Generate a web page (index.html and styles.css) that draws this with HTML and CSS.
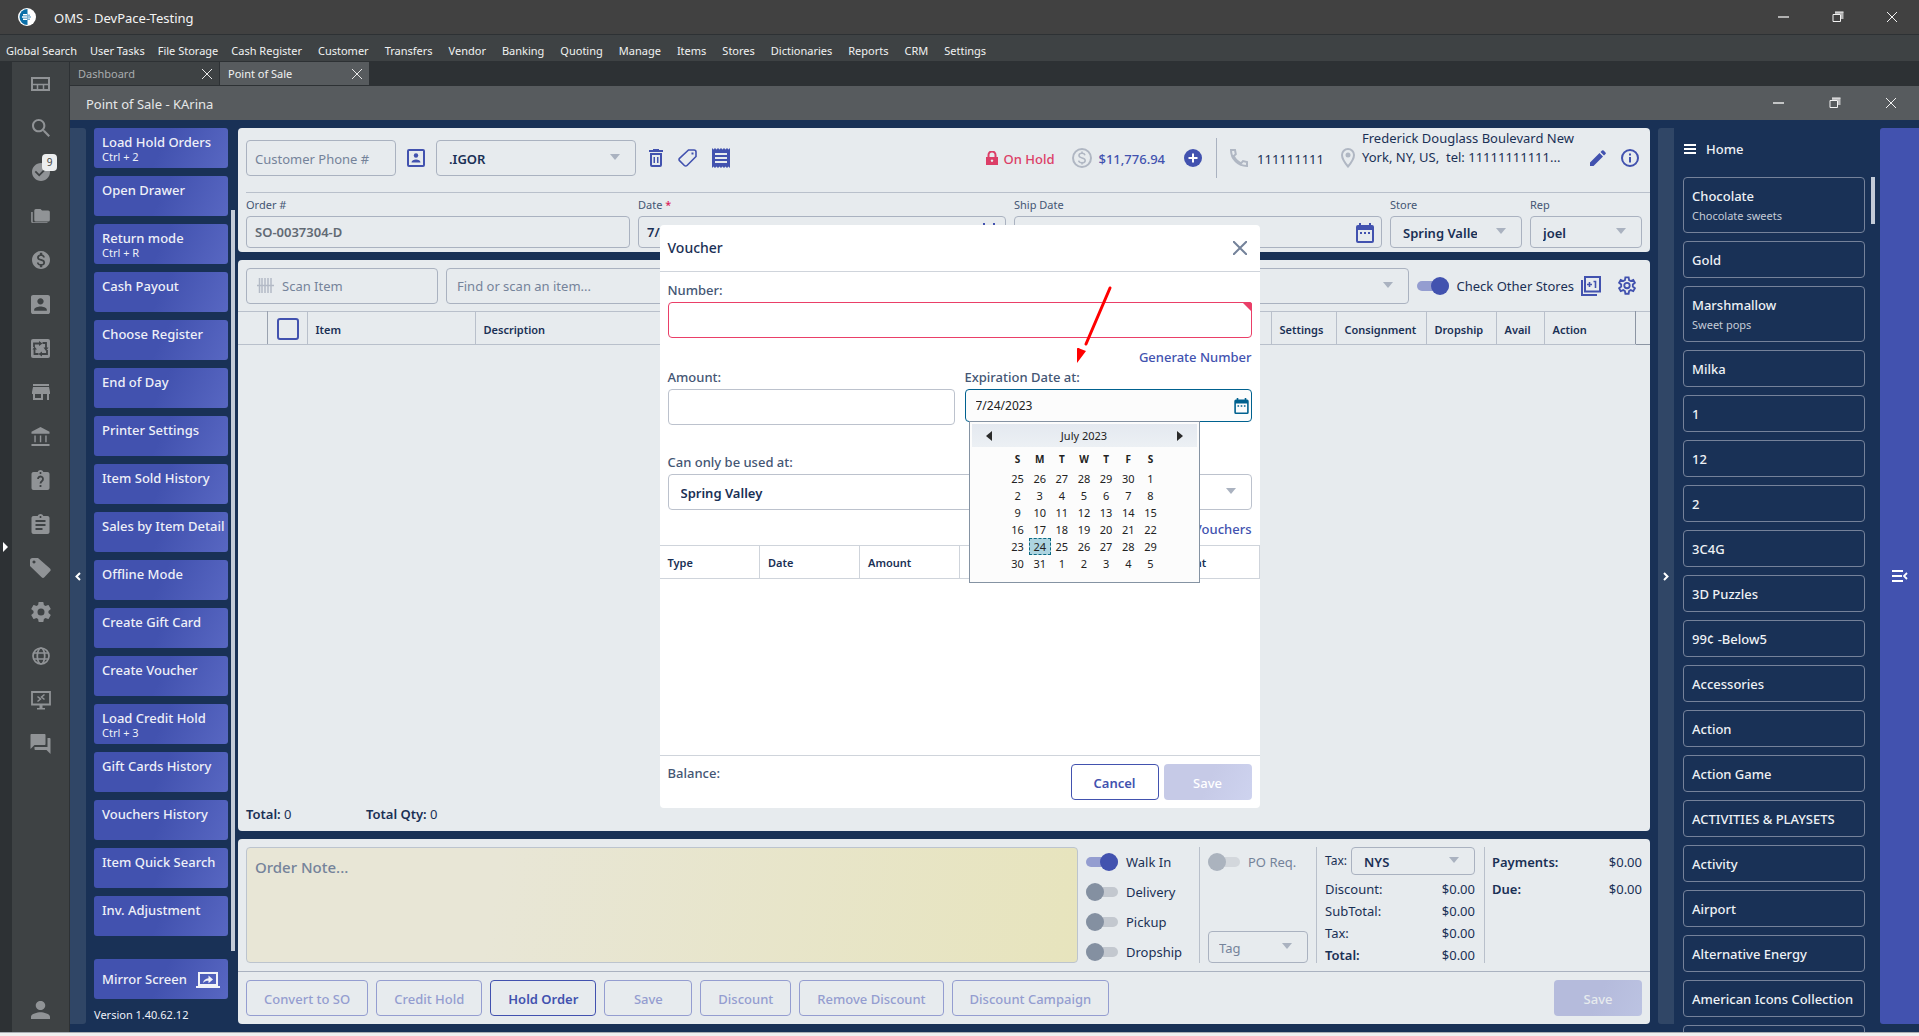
FILE: index.html
```html
<!DOCTYPE html>
<html lang="en">
<head>
<meta charset="utf-8">
<title>OMS - DevPace-Testing</title>
<link rel="stylesheet" href="styles.css">
</head>
<body>
<svg class="sprite" aria-hidden="true">
  <symbol id="i-cal" viewBox="0 0 18 20"><path d="M3 0h2v2h8V0h2v2h1a2 2 0 0 1 2 2v14a2 2 0 0 1-2 2H2a2 2 0 0 1-2-2V4a2 2 0 0 1 2-2h1zM2 7v11h14V7zm2 2h2v2H4zm4 0h2v2H8zm4 0h2v2h-2z" fill="currentColor" fill-rule="evenodd"/></symbol>
  <symbol id="i-close" viewBox="0 0 12 12"><path d="M1 1l10 10M11 1L1 11" stroke="currentColor" fill="none"/></symbol>
  <symbol id="i-restore" viewBox="0 0 12 12"><path d="M1 3.500h7.500v7H1z" fill="none" stroke="currentColor"/><path d="M3 3V1h8.500v7H9V3z" fill="currentColor" opacity=".65"/><path d="M3 1h8.500" stroke="currentColor"/></symbol>
  <symbol id="i-gear" viewBox="2 2 20 20"><path d="M12 15.500A3.500 3.500 0 0 1 8.500 12 3.500 3.500 0 0 1 12 8.500a3.500 3.500 0 0 1 3.500 3.500 3.500 3.500 0 0 1-3.500 3.500m7.430-2.530c.04-.32.07-.64.07-.97 0-.33-.03-.66-.07-1l2.110-1.630c.19-.15.24-.42.12-.64l-2-3.460c-.12-.22-.39-.31-.61-.22l-2.490 1c-.52-.39-1.060-.73-1.690-.98l-.37-2.650A.506.506 0 0 0 14 2h-4c-.25 0-.46.18-.5.42l-.37 2.650c-.63.25-1.170.59-1.690.98l-2.490-1c-.22-.09-.49 0-.61.22l-2 3.460c-.13.22-.07.49.12.64L4.570 11c-.04.34-.07.67-.07 1 0 .33.03.65.07.97l-2.110 1.660c-.19.15-.25.42-.12.64l2 3.460c.12.22.39.3.61.22l2.490-1.010c.52.4 1.060.74 1.690.99l.37 2.650c.04.24.25.42.5.42h4c.25 0 .46-.18.5-.42l.37-2.650c.63-.26 1.170-.59 1.690-.99l2.490 1.010c.22.08.49 0 .61-.22l2-3.460c.12-.22.07-.49-.12-.64z" fill="currentColor"/></symbol>
</svg>

<div class="app">
  <header class="titlebar">
    <svg class="logo" width="18" height="18" viewBox="0 0 18 18"><circle cx="9" cy="9" r="9" fill="#fff"/><path d="M9.500 1a8 8 0 0 0 0 16z" fill="#0b6fa8"/><path d="M5 6h4v1.500H5zM4 8.300h5v1.500H4zM5 10.600h4V12H5z" fill="#fff"/><path d="M9 6.500h3V8H9zM9 8.300h4v1.500H9zM9 10.600h3V12H9z" fill="#7fb4d3"/></svg>
    <h1>OMS - DevPace-Testing</h1>
    <div class="winbtns">
      <button aria-label="Minimize"><svg width="12" height="12" viewBox="0 0 12 12"><path d="M0 6h11" stroke="#b0b0b0" stroke-width="2"/></svg></button>
      <button aria-label="Restore"><svg width="12" height="12"><use href="#i-restore"/></svg></button>
      <button aria-label="Close"><svg width="12" height="12"><use href="#i-close"/></svg></button>
    </div>
  </header>
  <nav class="menubar">
    <a href="#">Global Search</a><a href="#">User Tasks</a><a href="#">File Storage</a><a href="#">Cash Register</a><a href="#">Customer</a><a href="#">Transfers</a><a href="#">Vendor</a><a href="#">Banking</a><a href="#">Quoting</a><a href="#">Manage</a><a href="#">Items</a><a href="#">Stores</a><a href="#">Dictionaries</a><a href="#">Reports</a><a href="#">CRM</a><a href="#">Settings</a>
  </nav>

  <div class="shell">
    <button class="edge" aria-label="Expand"><svg width="5" height="10" viewBox="0 0 5 10"><path d="M0 0l5 5-5 5z" fill="#fff"/></svg></button>
    <nav class="rail">
      <a href="#" aria-label="Dashboard"><svg width="19" height="14" viewBox="0 0 19 14"><path d="M1 1h17v12H1z" fill="none" stroke="currentColor" stroke-width="2"/><path d="M1 7.500h17M6.500 8v5M12.500 8v5" stroke="currentColor" stroke-width="1.500"/></svg></a>
      <a href="#" aria-label="Search"><svg width="18" height="18" viewBox="3 3 17.500 17.500"><path d="M15.500 14h-.79l-.28-.27C15.410 12.590 16 11.110 16 9.500 16 5.910 13.090 3 9.500 3S3 5.910 3 9.500 5.910 16 9.500 16c1.610 0 3.090-.59 4.230-1.570l.27.28v.79l5 4.990L20.490 19zm-6 0C7.010 14 5 11.990 5 9.500S7.010 5 9.500 5 14 7.010 14 9.500 11.990 14 9.500 14z" fill="currentColor"/></svg></a>
      <a href="#" aria-label="Tasks"><svg width="18" height="18" viewBox="2 2 20 20"><path d="M12 2C6.480 2 2 6.480 2 12s4.480 10 10 10 10-4.480 10-10S17.520 2 12 2zm-2 15l-5-5 1.410-1.410L10 14.170l7.590-7.590L19 8z" fill="currentColor"/></svg><span class="badge">9</span></a>
      <a href="#" aria-label="Files"><svg width="19" height="14" viewBox="0 2 24 18"><path d="M22 4H14L12 2H6A2 2 0 0 0 4 4V16A2 2 0 0 0 6 18H22A2 2 0 0 0 24 16V6A2 2 0 0 0 22 4M2 6H0V18A2 2 0 0 0 2 20H21V19H2z" fill="currentColor"/></svg></a>
      <a href="#" aria-label="Sales"><svg width="18" height="18" viewBox="2 2 20 20"><path d="M12 2C6.480 2 2 6.480 2 12s4.480 10 10 10 10-4.480 10-10S17.520 2 12 2zm1.410 16.090V20h-2.670v-1.930c-1.710-.36-3.160-1.460-3.270-3.400h1.960c.1 1.050.82 1.870 2.650 1.870 1.960 0 2.400-.98 2.400-1.590 0-.83-.44-1.610-2.670-2.140-2.480-.6-4.180-1.620-4.180-3.670 0-1.720 1.390-2.840 3.110-3.210V4h2.670v1.950c1.860.45 2.790 1.860 2.850 3.390H14.300c-.05-1.110-.64-1.870-2.220-1.870-1.500 0-2.400.68-2.400 1.640 0 .84.65 1.390 2.670 1.910s4.180 1.390 4.180 3.910c-.01 1.830-1.380 2.830-3.120 3.160z" fill="currentColor"/></svg></a>
      <a href="#" aria-label="Contacts"><svg width="19" height="19" viewBox="3 3 18 18"><path d="M3 5v14c0 1.100.89 2 2 2h14c1.100 0 2-.9 2-2V5c0-1.100-.9-2-2-2H5c-1.110 0-2 .9-2 2zm12 4c0 1.660-1.340 3-3 3s-3-1.340-3-3 1.340-3 3-3 3 1.340 3 3zm-9 8c0-2 4-3.100 6-3.100s6 1.100 6 3.100v1H6z" fill="currentColor"/></svg></a>
      <a href="#" aria-label="Transfers"><svg width="19" height="19" viewBox="0 0 19 19"><rect width="19" height="19" rx="2" fill="currentColor"/><path d="M3 8V4.500h6M11.500 4H15v5.500M16 11v4h-6M7.500 15H3.500v-5" fill="none" stroke="#3e4244" stroke-width="1.800"/><path d="M8 2l3.500 2.500L8 7zM12.500 8.500h5L15 12zM11 12.500v5L7.500 15zM1.500 10.500L3.500 7.500l2.500 3z" fill="#3e4244"/></svg></a>
      <a href="#" aria-label="Store"><svg width="18" height="16" viewBox="3 4 18 16"><path d="M20 4H4v2h16zm1 10v-2l-1-5H4l-1 5v2h1v6h10v-6h4v6h2v-6zm-9 4H6v-4h6z" fill="currentColor"/></svg></a>
      <a href="#" aria-label="Bank"><svg width="19" height="19" viewBox="2 1 19 20"><path d="M5 10h1.500v7H5zM10.800 10h1.500v7h-1.500zM16.500 10H18v7h-1.500zM2 19h19v2H2zM11.500 1L2 6v2h19V6z" fill="currentColor"/></svg></a>
      <a href="#" aria-label="Help"><svg width="19" height="20" viewBox="3 1 18 20"><path d="M19 3h-4.180C14.400 1.840 13.300 1 12 1c-1.300 0-2.400.84-2.820 2H5c-1.100 0-2 .9-2 2v14c0 1.100.9 2 2 2h14c1.100 0 2-.9 2-2V5c0-1.100-.9-2-2-2zm-7 0c.55 0 1 .45 1 1s-.45 1-1 1-1-.45-1-1 .45-1 1-1z" fill="currentColor"/><path d="M9.500 10a2.500 2.500 0 1 1 4 2c-1 .8-1.500 1.200-1.500 2.500M12 16v2" fill="none" stroke="#3e4244" stroke-width="1.800"/></svg></a>
      <a href="#" aria-label="Reports"><svg width="19" height="20" viewBox="3 1 18 20"><path d="M19 3h-4.180C14.400 1.840 13.300 1 12 1c-1.300 0-2.400.84-2.820 2H5c-1.100 0-2 .9-2 2v14c0 1.100.9 2 2 2h14c1.100 0 2-.9 2-2V5c0-1.100-.9-2-2-2zm-7 0c.55 0 1 .45 1 1s-.45 1-1 1-1-.45-1-1 .45-1 1-1zm2 14H7v-2h7zm3-4H7v-2h10zm0-4H7V7h10z" fill="currentColor"/></svg></a>
      <a href="#" aria-label="Prices"><svg width="21" height="20" viewBox="0 0 21 20"><path d="M0 2.500A2.500 2.500 0 0 1 2.500 0H8l12 10.500a2 2 0 0 1 0 2.800l-5.600 5.900a2 2 0 0 1-2.800 0L0 8zM4 2.400a1.500 1.500 0 1 0 .01 0z" fill="currentColor" fill-rule="evenodd"/></svg></a>
      <a href="#" aria-label="Settings"><svg width="20" height="20"><use href="#i-gear"/></svg></a>
      <a href="#" aria-label="Web"><svg width="18" height="18" viewBox="0 0 18 18"><g fill="none" stroke="currentColor" stroke-width="1.700"><circle cx="9" cy="9" r="8"/><ellipse cx="9" cy="9" rx="3.700" ry="8"/><path d="M1.500 6h15M1.500 12h15"/></g></svg></a>
      <a href="#" aria-label="Remote"><svg width="20" height="19" viewBox="0 0 20 19"><path d="M1 1h18v12.500H1z" fill="none" stroke="currentColor" stroke-width="1.800"/><path d="M8.500 14h3v3H14v1.500H6V17h2.500z" fill="currentColor"/><path d="M6.500 5.500l3 2.500-3 2.500M13.500 3.500l-3 2.500 3 2.500" fill="none" stroke="currentColor" stroke-width="1.500"/></svg></a>
      <a href="#" aria-label="Chat"><svg width="21" height="20" viewBox="2 2 20 20"><path d="M21 6h-2v9H6v2c0 .55.450 1 1 1h11l4 4V7c0-.55-.45-1-1-1zm-4 6V3c0-.55-.45-1-1-1H3c-.55 0-1 .45-1 1v14l4-4h10c.55 0 1-.45 1-1z" fill="currentColor"/></svg></a>
      <a href="#" class="last" aria-label="Profile"><svg width="19" height="18" viewBox="4 4 16 16" preserveAspectRatio="none"><path d="M12 12c2.210 0 4-1.790 4-4s-1.790-4-4-4-4 1.790-4 4 1.790 4 4 4zm0 2c-2.670 0-8 1.340-8 4v2h16v-2c0-2.660-5.330-4-8-4z" fill="currentColor"/></svg></a>
    </nav>

    <div class="content">
      <div class="tabs">
        <div class="tab"><a href="#">Dashboard</a><button aria-label="Close Dashboard"><svg width="12" height="12"><use href="#i-close"/></svg></button></div>
        <div class="tab active"><a href="#">Point of Sale</a><button aria-label="Close Point of Sale"><svg width="12" height="12"><use href="#i-close"/></svg></button></div>
      </div>
      <div class="docbar">
        <h2>Point of Sale - KArina</h2>
        <div class="winbtns">
          <button aria-label="Minimize"><svg width="12" height="12" viewBox="0 0 12 12"><path d="M0 6h11" stroke="#c3c5c6" stroke-width="2"/></svg></button>
          <button aria-label="Restore"><svg width="12" height="12"><use href="#i-restore"/></svg></button>
          <button aria-label="Close"><svg width="12" height="12"><use href="#i-close"/></svg></button>
        </div>
      </div>

      <div class="workspace">
        <button class="strip left" aria-label="Collapse actions"><svg width="6" height="9" viewBox="0 0 6 9"><path d="M5 1L1.500 4.500 5 8" fill="none" stroke="#fff" stroke-width="2"/></svg></button>
        <aside class="actions">
          <div class="action-list">
            <div class="buttons">
              <button>Load Hold Orders<small>Ctrl + 2</small></button>
              <button>Open Drawer</button>
              <button>Return mode<small>Ctrl + R</small></button>
              <button>Cash Payout</button>
              <button>Choose Register</button>
              <button>End of Day</button>
              <button>Printer Settings</button>
              <button>Item Sold History</button>
              <button>Sales by Item Detail</button>
              <button>Offline Mode</button>
              <button>Create Gift Card</button>
              <button>Create Voucher</button>
              <button>Load Credit Hold<small>Ctrl + 3</small></button>
              <button>Gift Cards History</button>
              <button>Vouchers History</button>
              <button>Item Quick Search</button>
              <button>Inv. Adjustment</button>
            </div>
            <div class="scrollbar"></div>
          </div>
          <button class="mirror">Mirror Screen<svg width="24" height="16" viewBox="0 0 24 16"><path d="M3 1h18v12H3z" fill="none" stroke="#f0f2f8" stroke-width="2"/><path d="M0 14h24v2H0z" fill="#f0f2f8"/><path d="M7 11c.5-3 2.500-4.500 5.500-4.800V3.500L17 7.500l-4.500 3.700V8.700C10 8.700 8.500 9.300 7 11z" fill="#f0f2f8"/></svg></button>
          <p class="version">Version 1.40.62.12</p>
        </aside>

        <main class="main">
          <section class="panel">
            <div class="customer">
              <input class="box phone" type="text" placeholder="Customer Phone #" aria-label="Customer Phone">
              <button class="ico" aria-label="Contact"><svg width="18" height="18" viewBox="0 0 18 18"><rect x="1" y="1" width="16" height="16" rx="1" fill="none" stroke="currentColor" stroke-width="2"/><circle cx="9" cy="6.500" r="2.200" fill="currentColor"/><path d="M4.500 13.500c0-4 9-4 9 0z" fill="currentColor"/></svg></button>
              <span class="select cust"><select aria-label="Customer"><option>.IGOR</option></select></span>
              <div class="tools">
                <button class="ico" aria-label="Delete"><svg width="14" height="18" viewBox="0 0 14 18"><path d="M4 0h6v1h4v2H0V1h4zM1 4h12v12a2 2 0 0 1-2 2H3a2 2 0 0 1-2-2zm2 2v10h8V6zm1.500 2H6v6H4.500zM8 8h1.500v6H8z" fill="currentColor" fill-rule="evenodd"/></svg></button>
                <button class="ico" aria-label="Tag"><svg width="19" height="18" viewBox="0 0 19 18"><path d="M10.500 1H16a2 2 0 0 1 2 2v4.500L9 16.500a1.800 1.800 0 0 1-2.600 0l-4.900-4.900a1.600 1.600 0 0 1 0-2.300z" fill="none" stroke="currentColor" stroke-width="1.600"/><path d="M13.500 3.500h2v2h-2z" fill="currentColor"/></svg></button>
                <button class="ico" aria-label="Receipt"><svg width="18" height="20" viewBox="0 0 18 20"><path d="M0 0l1.500 1.500L3 0l1.500 1.500L6 0l1.500 1.500L9 0l1.500 1.500L12 0l1.500 1.500L15 0l1.500 1.500L18 0v20l-1.500-1.500L15 20l-1.500-1.500L12 20l-1.500-1.500L9 20l-1.500-1.500L6 20l-1.500-1.500L3 20l-1.500-1.500L0 20zM3 5v2h12V5zm0 4v2h12V9zm0 4v2h12v-2z" fill="currentColor" fill-rule="evenodd"/></svg></button>
              </div>
              <div class="status">
                <svg width="12" height="14" viewBox="0 0 12 14"><path d="M0 6h1.500V4a4.500 4.500 0 0 1 9 0v2H12v8H0zm3.500 0h5V4a2.500 2.500 0 0 0-5 0zM6 8.500a1.200 1.200 0 1 0 .01 0z" fill="currentColor" fill-rule="evenodd"/></svg>
                <span class="hold">On Hold</span>
                <svg class="muted" width="20" height="20" viewBox="0 0 20 20"><circle cx="10" cy="10" r="9" fill="none" stroke="currentColor" stroke-width="2"/><path d="M13 7.200C12.600 5.900 11.500 5.300 10 5.300c-1.700 0-3 .8-3 2.200 0 3.200 6.200 1.600 6.200 4.900 0 1.500-1.400 2.300-3.200 2.300-1.700 0-3-.7-3.400-2.100M10 3.500v2M10 14.500v2" fill="none" stroke="currentColor" stroke-width="1.600"/></svg>
                <a href="#" class="amount">$11,776.94</a>
                <button class="ico" aria-label="Add"><svg width="18" height="18" viewBox="0 0 18 18"><circle cx="9" cy="9" r="9" fill="currentColor"/><path d="M9 4.500v9M4.500 9h9" stroke="#fff" stroke-width="2"/></svg></button>
              </div>
              <div class="contact">
                <svg class="muted" width="18" height="18" viewBox="0 0 18 18"><path d="M1 1h4l.8 4.200L3.700 7c1.400 3.200 4 5.800 7.300 7.300l2-2.200 4 .9v4C8 17 1 10 1 1z" fill="none" stroke="currentColor" stroke-width="2"/></svg>
                <span class="tel">111111111</span>
                <svg class="muted" width="14" height="20" viewBox="0 0 14 20"><path d="M7 1a6 6 0 0 1 6 6c0 4.500-6 11.500-6 11.500S1 11.500 1 7a6 6 0 0 1 6-6z" fill="none" stroke="currentColor" stroke-width="2"/><circle cx="7" cy="7" r="2.500" fill="currentColor"/></svg>
                <address>Frederick Douglass Boulevard New<br>York, NY, US,&nbsp; tel: 11111111111...</address>
                <button class="ico" aria-label="Edit"><svg width="16" height="16" viewBox="0 0 16 16"><path d="M0 12.500L9.500 3l3.500 3.500L3.500 16H0zM10.500 2L12 .5a1.200 1.200 0 0 1 1.600 0l1.900 1.900a1.200 1.200 0 0 1 0 1.600L14 5.500z" fill="currentColor"/></svg></button>
                <button class="ico" aria-label="Info"><svg width="18" height="18" viewBox="0 0 18 18"><circle cx="9" cy="9" r="8" fill="none" stroke="currentColor" stroke-width="2"/><path d="M8 4.500h2v2H8zM8 8h2v5.500H8z" fill="currentColor"/></svg></button>
              </div>
            </div>
            <div class="orderrow">
              <div class="field order"><label for="ord">Order #</label><input id="ord" class="box ro" type="text" value="SO-0037304-D" readonly></div>
              <div class="field"><label for="dat">Date <b class="req">*</b></label><span class="datebox"><input id="dat" class="box" type="text" value="7/24/2023"><svg width="18" height="20"><use href="#i-cal"/></svg></span></div>
              <div class="field"><label for="ship">Ship Date</label><span class="datebox"><input id="ship" class="box" type="text"><svg width="18" height="20"><use href="#i-cal"/></svg></span></div>
              <div class="field store"><label for="sto">Store</label><span class="select"><select id="sto"><option>Spring Valley</option></select></span></div>
              <div class="field rep"><label for="rep">Rep</label><span class="select"><select id="rep"><option>joel</option></select></span></div>
            </div>
          </section>

          <section class="panel items">
            <div class="scanrow">
              <span class="scan"><svg width="17" height="15" viewBox="0 0 17 15"><path d="M2.500 0v15M5 0v15M8 0v15M11 0v15M14 0v15M0 7.500h17" stroke="#b3bac6" stroke-width="1.500"/></svg><input class="box" type="text" placeholder="Scan Item" aria-label="Scan Item"></span>
              <span class="select find"><input class="box" type="text" placeholder="Find or scan an item..." aria-label="Find item"></span>
              <label class="toggle"><input type="checkbox" checked>Check Other Stores</label>
              <button class="ico add1" aria-label="Add one"><svg width="20" height="20" viewBox="0 0 20 20"><path d="M4 1h15v14.500H4zM1 4v15h15" fill="none" stroke="currentColor" stroke-width="2"/><path d="M6 8.500h5M8.500 6v5M12.500 5.500h2V12" fill="none" stroke="currentColor" stroke-width="1.600"/></svg></button>
              <button class="ico" aria-label="Settings"><svg width="20" height="20" viewBox="1 1 22 22"><path d="M10.200 2.500h3.600l.5 3 1.800 1 2.800-1.100 1.800 3.100-2.300 1.900v2.200l2.300 1.900-1.800 3.100-2.800-1.100-1.800 1-.5 3h-3.600l-.5-3-1.800-1-2.800 1.100-1.800-3.100 2.300-1.900v-2.200L3.300 8.500l1.800-3.100 2.800 1.100 1.800-1z" fill="none" stroke="currentColor" stroke-width="2"/><circle cx="12" cy="11.500" r="3" fill="none" stroke="currentColor" stroke-width="2"/></svg></button>
            </div>
            <table class="grid">
              <colgroup><col style="width:29px"><col style="width:40px"><col style="width:168px"><col><col style="width:65px"><col style="width:90px"><col style="width:70px"><col style="width:48px"><col style="width:91px"><col style="width:15px"></colgroup>
              <thead><tr><th class="gut"></th><th class="chk"><input type="checkbox" aria-label="Select all"></th><th>Item</th><th>Description</th><th>Settings</th><th>Consignment</th><th>Dropship</th><th>Avail</th><th>Action</th><th class="gut2"></th></tr></thead>
            </table>
            <div class="totals"><span><b>Total:</b> 0</span><span><b>Total Qty:</b> 0</span></div>
          </section>

          <section class="panel">
            <div class="summary">
              <textarea class="note" placeholder="Order Note..." aria-label="Order note"></textarea>
              <div class="modes">
                <label class="toggle"><input type="checkbox" checked>Walk In</label>
                <label class="toggle"><input type="checkbox">Delivery</label>
                <label class="toggle"><input type="checkbox">Pickup</label>
                <label class="toggle"><input type="checkbox">Dropship</label>
              </div>
              <div class="po">
                <label class="toggle off"><input type="checkbox" disabled>PO Req.</label>
                <span class="select tag"><select aria-label="Tag"><option>Tag</option></select></span>
              </div>
              <div class="taxes">
                <div class="taxrow"><label for="tax">Tax:</label><span class="select tax"><select id="tax"><option>NYS</option></select></span></div>
                <dl><div><dt>Discount:</dt><dd>$0.00</dd></div><div><dt>SubTotal:</dt><dd>$0.00</dd></div><div><dt>Tax:</dt><dd>$0.00</dd></div><div class="strong"><dt>Total:</dt><dd>$0.00</dd></div></dl>
              </div>
              <dl class="pay"><div class="strong"><dt>Payments:</dt><dd>$0.00</dd></div><div class="strong"><dt>Due:</dt><dd>$0.00</dd></div></dl>
            </div>
            <div class="cmds">
              <button disabled>Convert to SO</button><button disabled>Credit Hold</button><button class="on">Hold Order</button><button disabled>Save</button><button disabled>Discount</button><button disabled>Remove Discount</button><button disabled>Discount Campaign</button>
              <button class="primary" disabled>Save</button>
            </div>
          </section>
        </main>

        <button class="strip right" aria-label="Collapse catalog"><svg width="6" height="9" viewBox="0 0 6 9"><path d="M1 1l3.500 3.500L1 8" fill="none" stroke="#fff" stroke-width="2"/></svg></button>
        <aside class="catalog">
          <div class="home"><svg width="12" height="10" viewBox="0 0 12 10"><path d="M0 1h12M0 5h12M0 9h12" stroke="#fff" stroke-width="2"/></svg>Home</div>
          <div class="cards">
            <div class="cardlist">
              <button>Chocolate<small>Chocolate sweets</small></button>
              <button>Gold</button>
              <button>Marshmallow<small>Sweet pops</small></button>
              <button>Milka</button>
              <button>1</button>
              <button>12</button>
              <button>2</button>
              <button>3C4G</button>
              <button>3D Puzzles</button>
              <button>99¢ -Below5</button>
              <button>Accessories</button>
              <button>Action</button>
              <button>Action Game</button>
              <button>ACTIVITIES &amp; PLAYSETS</button>
              <button>Activity</button>
              <button>Airport</button>
              <button>Alternative Energy</button>
              <button>American Icons Collection</button>
              <button aria-label="Next category"></button>
            </div>
            <div class="scrollbar short"></div>
          </div>
        </aside>
        <button class="drawer" aria-label="Open menu"><svg width="16" height="12" viewBox="0 0 16 12"><path d="M0 1h11M0 6h10M0 11h11M15 3l-3 3 3 3" fill="none" stroke="#fff" stroke-width="1.800"/></svg></button>
      </div>
    </div>
  </div>
  <footer class="taskline"></footer>

  <div class="overlay">
    <form class="modal" role="dialog" aria-labelledby="vt">
      <header><h3 id="vt">Voucher</h3><button type="button" aria-label="Close"><svg width="14" height="14" viewBox="0 0 14 14"><path d="M0 0l14 14M14 0L0 14" stroke="#74829a" stroke-width="2"/></svg></button></header>
      <div class="body">
        <div class="mfield"><label for="num">Number:</label><span class="invalid"><input id="num" class="box" type="text"></span></div>
        <a href="#" class="link">Generate Number</a>
        <div class="pair">
          <div class="mfield"><label for="amt">Amount:</label><input id="amt" class="box" type="text"></div>
          <div class="mfield"><label for="exp">Expiration Date at:</label>
            <div class="exp"><input id="exp" class="box" type="text" value="7/24/2023"><svg width="15" height="16"><use href="#i-cal"/></svg>
              <div class="calendar">
                <div class="calhead"><button type="button" aria-label="Previous month"><svg width="6" height="10" viewBox="0 0 6 10"><path d="M6 0v10L0 5z" fill="#2b2b2b"/></svg></button><span>July 2023</span><button type="button" aria-label="Next month"><svg width="6" height="10" viewBox="0 0 6 10"><path d="M0 0v10l6-5z" fill="#2b2b2b"/></svg></button></div>
                <table>
                  <thead><tr><th>S</th><th>M</th><th>T</th><th>W</th><th>T</th><th>F</th><th>S</th></tr></thead>
                  <tbody>
                    <tr><td>25</td><td>26</td><td>27</td><td>28</td><td>29</td><td>30</td><td>1</td></tr>
                    <tr><td>2</td><td>3</td><td>4</td><td>5</td><td>6</td><td>7</td><td>8</td></tr>
                    <tr><td>9</td><td>10</td><td>11</td><td>12</td><td>13</td><td>14</td><td>15</td></tr>
                    <tr><td>16</td><td>17</td><td>18</td><td>19</td><td>20</td><td>21</td><td>22</td></tr>
                    <tr><td>23</td><td class="sel">24</td><td>25</td><td>26</td><td>27</td><td>28</td><td>29</td></tr>
                    <tr><td>30</td><td>31</td><td>1</td><td>2</td><td>3</td><td>4</td><td>5</td></tr>
                  </tbody>
                </table>
              </div>
            </div>
          </div>
        </div>
        <div class="mfield"><label for="use">Can only be used at:</label><span class="select"><select id="use"><option>Spring Valley</option></select></span></div>
        <a href="#" class="link">Vouchers</a>
      </div>
      <table class="vgrid"><colgroup><col style="width:100px"><col style="width:100px"><col style="width:100px"><col style="width:97px"><col style="width:98px"><col></colgroup><thead><tr><th>Type</th><th>Date</th><th>Amount</th><th></th><th></th><th>Amount</th></tr></thead></table>
      <div class="vbody"></div>
      <footer><span>Balance:</span><div><button type="button" class="cancel">Cancel</button><button class="primary" disabled>Save</button></div></footer>
      <svg class="arrow" width="38" height="80" viewBox="0 0 38 80"><path d="M34 4L10 60" stroke="#f00" stroke-width="3" stroke-linecap="round"/><path d="M1 79L2 64l8 3z M1 79V64l9 3z" fill="#f00"/></svg>
    </form>
  </div>
</div>
</body>
</html>
```
FILE: styles.css
```css
*{box-sizing:border-box}
body{margin:0;font:13px/18px "Noto Sans","Open Sans",sans-serif;color:#1a3055;background:#193156}
h1,h2,h3,p,dl,dd{margin:0;font-weight:400}
button,input,select,textarea{font:inherit;color:inherit;margin:0}
button{border:0;background:none;padding:0;display:flex;align-items:center;justify-content:center}
a{color:inherit;text-decoration:none}
svg{display:block;flex:none}
address{font-style:normal}
.sprite{position:absolute;width:0;height:0}
.app{position:relative;height:100vh;display:flex;flex-direction:column;overflow:hidden}

.titlebar{height:35px;flex:none;display:flex;align-items:center;padding-left:18px;background:#414141;border-bottom:1px solid #2d3134;color:#f4f4f4}
.titlebar h1{flex:1;margin-left:18px;font-size:13px;line-height:18px;padding-top:2px}
.winbtns{display:flex;color:#f2f2f2}
.winbtns button{width:54px;height:30px}
.menubar{height:26px;flex:none;display:flex;gap:13px;align-items:center;padding:5px 6px 0;background:#3e4244;color:#f1f2f2;font-size:11px;line-height:16px;white-space:nowrap}
.menubar a:nth-child(n+4){margin-right:3px}

.shell{flex:1;min-height:0;display:flex}
.edge{width:12px;background:#2d3134;padding-right:2px}
.rail{width:58px;flex:none;display:flex;flex-direction:column;background:#3e4244;border-right:1px solid #2d3134;border-top:1px solid #2d3134;color:#909396}
.rail a{position:relative;height:44px;display:flex;align-items:center;justify-content:center}
.rail .last{margin-top:auto}
.badge{position:absolute;left:30px;top:4px;width:15px;height:17px;border-radius:4px;background:#eceeef;color:#444;font-size:10px;line-height:17px;text-align:center}
.content{flex:1;min-width:0;display:flex;flex-direction:column}
.tabs{height:25px;flex:none;display:flex;gap:1px;padding-top:1px;background:#2d3134}
.tab{width:149px;display:flex;align-items:center;justify-content:space-between;padding:1px 6px 0 8px;margin-bottom:1px;background:#3e4244;color:#a9acae;font-size:11px}
.tab.active{background:#575b5e;color:#f1f2f2}
.tab button{color:#e8e8e8}
.docbar{height:34px;flex:none;display:flex;align-items:center;justify-content:space-between;padding-left:16px;background:#575b5e;color:#e6e8e9}
.docbar h2{font-size:13px;line-height:18px;padding-top:2px}
.docbar .winbtns button{width:56px}

.workspace{flex:1;min-height:0;display:flex;padding:8px 0;background:#193156}
.strip{width:16px;flex:none;background:#304666;border-radius:0 3px 3px 0}
.strip.right{margin-left:8px;border-radius:3px 0 0 3px}
.actions{width:152px;flex:none;display:flex;flex-direction:column;padding-left:8px;color:#eef0f8}
.action-list{flex:1;min-height:0;display:flex;gap:3px}
.buttons{width:134px;display:flex;flex-direction:column;gap:8px}
.actions button{width:134px;height:40px;flex:none;flex-direction:column;align-items:flex-start;justify-content:flex-start;padding:6px 0 0 8px;border-radius:3px;background:linear-gradient(115deg,#4252af 50%,#5867c2);font-weight:500;line-height:17px;white-space:nowrap}
.actions small{font-size:11px;line-height:12px;font-weight:400}
.scrollbar{width:4px;background:#c3cbd8;margin:82px 0 8px}
.actions .mirror{flex-direction:row;align-items:center;justify-content:space-between;padding:1px 8px 0}
.version{font-size:11px;line-height:16px;padding:8px 0 1px}

.main{flex:1;min-width:0;display:flex;flex-direction:column;gap:8px}
.panel{background:#e7ebee;border-radius:4px;overflow:hidden}
.customer{height:65px;display:flex;align-items:center;margin-left:8px;padding:0 11px 5px 0;border-bottom:1px solid #b9c0cb}
.box,.select select{width:100%;height:36px;border:1px solid #aab2c0;border-radius:4px;background:transparent;outline:0;padding:0 8px;font-size:13px}
.box::placeholder,.note::placeholder{color:#75839a;opacity:1}
.customer .phone{width:150px;padding-top:2px}
.ico{color:#4252af}
.phone+.ico{margin:0 11px}
.select{position:relative;display:block}
.select select{appearance:none;padding:2px 44px 0 12px;font-weight:600;overflow:hidden}
.select::after{content:"";position:absolute;right:16px;top:50%;margin-top:-4px;border:5px solid transparent;border-top:6px solid #aab2c0;border-bottom:0}
.cust{width:200px}
.tools{display:flex;gap:15px;margin-left:13px}
.status{margin-left:auto;display:flex;align-items:center;color:#dc3e67;padding-right:14px;border-right:1px solid #aab2c0;height:40px}
.hold{margin:2px 18px 0 6px;font-weight:500}
.muted{color:#b0b7c3}
.amount{color:#4252af;font-weight:500;margin:2px 19px 0 6px}
.contact{display:flex;align-items:center;margin-left:13px}
.tel{margin:2px 17px 0 9px}
.contact address{width:212px;min-height:58px;line-height:19px;margin:0 16px 0 7px;white-space:nowrap}
.contact .ico+.ico{margin-left:15px}
.orderrow{display:flex;gap:8px;padding:2px 8px 4px}
.field{flex:23}
.field.order{flex:24}
.field.store{flex:0 0 132px}
.field.rep{flex:0 0 112px}
.field label{display:block;font-size:11px;line-height:20px;padding-bottom:1px;color:#445674}
.req{color:#dc1e5a;font-weight:500}
.field .box,.field select{height:32px;font-weight:600}
.box.ro{color:#626a74}
.datebox{position:relative;display:block}
.datebox svg{position:absolute;right:8px;top:7px;color:#4252af}

.items{flex:1;min-height:0;display:flex;flex-direction:column}
.scanrow{display:flex;align-items:center;padding:8px 13px 7px 8px}
.scan{position:relative;width:192px;margin-right:8px}
.scan svg{position:absolute;left:11px;top:10px}
.scan .box{padding-left:35px}
.find{flex:1;margin-right:8px}
.find .box{padding-left:10px}
.toggle{display:flex;align-items:center;gap:8px;white-space:nowrap}
.toggle input{appearance:none;position:relative;width:32px;height:10px;border-radius:5px;background:#c3c8cf}
.toggle input::before{content:"";position:absolute;left:0;top:-4px;width:18px;height:18px;border-radius:9px;background:#8490a1}
.toggle input:checked{background:#949dd0}
.toggle input:checked::before{left:14px;background:#4252af}
.toggle.off{color:#75839a}
.toggle.off input{background:#d3d7dc}
.toggle.off input::before{background:#abb3be}
.add1{margin:0 16px 0 7px}
table{border-collapse:collapse}
.grid{width:100%;table-layout:fixed}
.grid th{height:33px;padding:3px 0 0 8px;text-align:left;font-size:11px;font-weight:600;border:1px solid #b9c0cb;border-width:1px 1px 1px 0}
.grid .gut{border-right-color:#9aa2af}
.grid .gut2{border-right:0;border-bottom-color:#8c95a3}
.grid th:nth-last-child(2){border-right-color:#8c95a3}
.grid .chk{padding:1px 0 0 9px}
.chk input{appearance:none;display:block;width:22px;height:22px;border:2px solid #4252af;border-radius:3px}
.totals{margin-top:auto;display:flex;padding:0 8px 8px}
.totals span{width:120px}
.totals b,.strong{font-weight:600}

.summary{display:flex;padding:8px;height:132px}
.note{flex:1;resize:none;border:1px solid #bcc4ce;border-radius:4px;background:linear-gradient(100deg,#e8e6d6 30%,#e7e4bd);padding:8px;font-size:15px;line-height:22px;outline:0;font-weight:500}
.modes{display:flex;flex-direction:column;gap:12px;padding:6px 0 0 8px;width:122px;border-right:1px solid #b9c0cb}
.po{width:117px;padding:6px 8px 0;display:flex;flex-direction:column;justify-content:space-between;border-right:1px solid #b9c0cb}
.tag select{height:32px;font-weight:400;color:#75839a;padding-left:10px}
.taxes{width:168px;padding:0 9px 0 8px;border-right:1px solid #b9c0cb}
.taxrow{display:flex;gap:4px;align-items:center;justify-content:space-between;font-size:12px}
.tax{width:125px}
.tax select{height:28px}
dl>div{display:flex;justify-content:space-between;line-height:22px}
.taxes dl{padding-top:3px}
.pay{width:157px;padding:4px 0 0 7px;display:flex;flex-direction:column;gap:5px}
.cmds{display:flex;gap:8px;padding:8px;border-top:1px solid #aab2c0}
.cmds button,.modal footer button{min-width:88px;height:36px;padding:1px 17px 0;border:1px solid #949dd0;border-radius:4px;color:#949dd0;font-weight:500;white-space:nowrap}
.cmds .on,.modal footer .cancel{border-color:#4252af;color:#4252af;font-weight:600}
.cmds .primary{margin-left:auto;border:0;color:#e7ebee;background:linear-gradient(115deg,#b5bbdc 50%,#bcc3e2)}

.catalog{width:206px;flex:none;display:flex;flex-direction:column;padding-left:9px;margin-bottom:-8px;color:#eef1f5;font-weight:500}
.home{height:49px;flex:none;display:flex;align-items:center;gap:10px;padding:0 0 8px 1px;line-height:18px}
.cards{flex:1;min-height:0;display:flex;gap:6px;overflow:hidden}
.cardlist{width:182px;display:flex;flex-direction:column;gap:8px}
.cardlist button{height:37px;flex:none;flex-direction:column;align-items:flex-start;padding:0 0 0 8px;border:1px solid #75829a;border-radius:4px;white-space:nowrap}
.cardlist button:has(small){height:56px;padding-top:3px}
.cardlist small{font-size:11px;line-height:22px;font-weight:400;color:#c4cbd6}
.scrollbar.short{height:47px;margin:0}
.drawer{flex:1 0 39px;max-width:39px;background:#4252af;border-radius:3px 0 0 3px}
.taskline{height:4px;flex:none;background:#f0f0f0;border-top:1px solid #a9adb3}

.overlay{position:absolute;inset:0 0 3px;display:flex;align-items:center;justify-content:center}
.modal{position:relative;width:600px;background:#fff;border-radius:4px}
.modal header{height:47px;display:flex;align-items:center;justify-content:space-between;padding:0 13px 0 8px;border-bottom:1px solid #cfd4db}
.modal h3{font-size:14px;line-height:20px;font-weight:500}
.modal .body{padding:8px 8px 0}
.mfield{flex:1}
.mfield label{display:block;line-height:20px;color:#445674;font-weight:500}
.mfield label+*{margin-top:2px}
.mfield .box,.mfield select{border-color:#bcc2cd}
.invalid{position:relative;display:block}
.mfield .invalid .box{border-color:#ea3f68;display:block}
.invalid::after{content:"";position:absolute;right:0;top:0;border:5px solid transparent;border-top-color:#ea3f68;border-right-color:#ea3f68;border-top-right-radius:3px}
.link{display:block;text-align:right;color:#4252af;font-weight:500;line-height:19px;margin-top:10px}
.pair{display:flex;gap:10px}
.pair .mfield{height:85px}
.exp{position:relative}
.mfield .exp .box{height:33px;border-color:#00618f;background:#fcfcfc;color:#222;font-size:12px;padding-left:10px;display:block}
.exp>svg{position:absolute;right:3px;top:9px;color:#00618f}
.calendar{position:absolute;z-index:2;left:4px;top:32px;width:231px;height:162px;padding:2px;background:#fcfcfc;border:1px solid #8593a3;color:#222;font-size:11px}
.calhead{height:23px;display:flex;align-items:center;justify-content:space-between;padding:0 14px;background:linear-gradient(#e4e9f0,#ecf0f4)}
.calendar table{margin:2px auto 0;table-layout:fixed;width:155px}
.calendar td,.calendar th{padding:0;height:17px;line-height:15px;text-align:center}
.calendar th{font-size:10px;height:21px}
.calendar .sel{background:#add4e0;outline:1px dashed #0c6b84;outline-offset:-1px}
.vgrid{width:600px;table-layout:fixed;margin-top:6px}
.vgrid th{height:33px;padding:2px 0 0 8px;text-align:left;font-size:11px;font-weight:600;border:1px solid #cfd4db;border-left:0}
.vbody{height:176px}
.modal footer{display:flex;justify-content:space-between;padding:8px;border-top:1px solid #cfd4db;color:#445674;font-weight:500}
.modal footer div{display:flex;gap:5px}
.modal footer .primary{border:0;color:#fff;background:linear-gradient(115deg,#c6cae7 50%,#ced3ef)}
.modal .arrow{position:absolute;right:146px;top:59px;z-index:3}
```
